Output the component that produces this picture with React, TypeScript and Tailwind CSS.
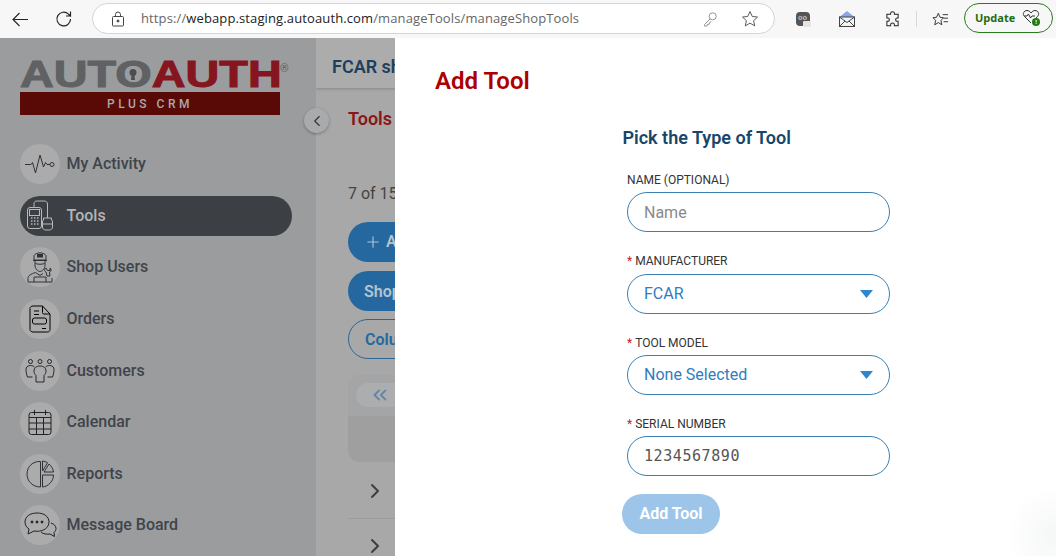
import { ChevronLeft, ChevronRight, ChevronsLeft, Plus } from 'lucide-react'
import type { ReactNode } from 'react'

const roboto = 'font-[Roboto,sans-serif]'

const ActivityIcon = () => (
  <svg width="32" height="32" viewBox="0 0 32 32" fill="none" stroke="#2e3238" strokeWidth="1">
    <path d="M1 16.500h6l1.500-2 3 10.500L16 7l3.500 12 2-4.500 1.500 2h3" />
    <circle cx="28" cy="16.500" r="2" />
  </svg>
)

const ToolsIcon = () => (
  <svg width="28" height="32" viewBox="0 0 28 32" fill="none" stroke="#b7b9bb" strokeWidth="1">
    <rect x="1.500" y="7.500" width="14" height="21" rx="2.500" />
    <rect x="3.500" y="9.500" width="10" height="6" />
    <path d="M5 18h1.500M8 18h1.500M11 18h1.500M5 21h1.500M8 21h1.500M11 21h1.500M5 24h1.500M8 24h1.500M11 24h1.500" strokeWidth="1.600" />
    <path d="M8 7.500V4c0-2 1-3 3-3h7c2.500 0 3.500 1.500 3.500 3v14" />
    <path d="M17.500 18h8v2l1 1v7l-2 2h-6l-2-2v-7l1-1z" />
    <path d="M17 24h9" />
  </svg>
)

const UserIcon = () => (
  <svg width="26" height="32" viewBox="0 0 26 32" fill="none" stroke="#2e3238" strokeWidth="1">
    <path d="M7 9V4.500C9 1 17 1 19 4.500V9z" />
    <rect x="10.500" y="3.500" width="5" height="2.500" fill="#2e3238" />
    <path d="M6 9.500h14M8 10v4c0 4 3 6.500 5 6.500s5-2.500 5-6.500v-4" />
    <path d="M8.500 12.500c3 1 6 1 9 0" />
    <path d="M1 31v-3.500c0-3 3-4.500 7.500-6l4.500 3 3-2M25 31v-4M1 31h24M7 31v-5h12v5" />
    <path d="M19 17c-2 1-1.500 3.500 0 4l1 4h3l-.500-4c2-.500 2-3 .500-4v2.500h-2.500z" />
  </svg>
)

const OrdersIcon = () => (
  <svg width="22" height="28" viewBox="0 0 22 28" fill="none" stroke="#000" strokeWidth="1">
    <path d="M4 1h9.500l7.500 8v15.500c0 1.500-1 2.500-2.500 2.500H4c-1.500 0-3-1-3-2.500v-21C1 2 2.500 1 4 1z" />
    <path d="M13.500 1v6.500c0 1 .5 1.500 1.500 1.500h6" />
    <path d="M5 6h5M5 9.500h5M13 23.500h4" />
    <rect x="3.500" y="13" width="14" height="6" rx="2" />
  </svg>
)

const CustomersIcon = () => (
  <svg width="30" height="24" viewBox="0 0 30 24" fill="none" stroke="#23262b" strokeWidth="1">
    <circle cx="5.500" cy="2.500" r="2" />
    <circle cx="15" cy="2.500" r="2" />
    <circle cx="24.500" cy="2.500" r="2" />
    <path d="M9.500 8c-1-1-2.500-1.500-4-1.500-3 0-4.500 2-4.500 4 0 2.500.5 5 1.500 7.500h5" />
    <path d="M20.500 8c1-1 2.500-1.500 4-1.500 3 0 4.500 2 4.500 4 0 2.500-.5 5-1.500 7.500h-5" />
    <path d="M15 7c-3.500 0-6 2-6 5 0 2 1 3.500 2 4.500V23h8v-6.500c1-1 2-2.500 2-4.500 0-3-2.500-5-6-5z" />
  </svg>
)

const CalendarIcon = () => (
  <svg width="24" height="26" viewBox="0 0 24 26" fill="none" stroke="#1f2226" strokeWidth="1">
    <rect x="1" y="3.500" width="22" height="22" rx="2.500" />
    <path d="M1 8.500h22M1 14h22M1 20h22M8.500 8.500v17M15.500 8.500v17M6.500 1v5M17.500 1v5" />
  </svg>
)

const ReportsIcon = () => (
  <svg width="28" height="28" viewBox="0 0 28 28" fill="none" stroke="#2e3238" strokeWidth="1">
    <path d="M14.500 1.500C7 1 1 6.500 1 14s6 13 13.500 13V14z" />
    <path d="M16.500 1c2 .2 3.500.8 5 1.800L16.500 11z" />
    <path d="M23 4c2.500 2 4 5 4.500 8H18z" />
    <path d="M16.500 15h11c0 6-5 11.500-11 12z" />
  </svg>
)

const MessageIcon = () => (
  <svg width="33" height="26" viewBox="0 0 33 26" fill="none" stroke="#1f2226" strokeWidth="1">
    <path d="M13 1C6 1 1 4.500 1 10c0 3 1.500 5.500 4 7l-1 5 6-3c1 .2 2 .3 3 .3 7 0 12-4 12-9.300C25 4.500 20 1 13 1z" />
    <circle cx="8" cy="10" r="1" fill="#1f2226" />
    <circle cx="13" cy="10" r="1" fill="#1f2226" />
    <circle cx="18" cy="10" r="1" fill="#1f2226" />
    <path d="M27 11c3 1 5 3 5 5.500 0 1.500-.8 3-2 4l.5 4-4.500-2.500c-3 .5-7 0-9-2" />
  </svg>
)

const NavItem = ({ icon, label, active }: { icon: ReactNode; label: string; active?: boolean }) => (
  <div className={`flex items-center h-10 rounded-full w-[272px] ${active ? 'bg-[#3c4044]' : ''}`}>
    <div className={`w-10 h-10 rounded-full flex items-center justify-center shrink-0 ${active ? '' : 'bg-[#ababac]'}`}>
      {icon}
    </div>
    <span className={`ml-[6.500px] text-base font-medium ${active ? 'text-[#b3b5b7]' : 'text-[#3f444b]'}`}>{label}</span>
  </div>
)

const Field = ({ label, required, children }: { label: string; required?: boolean; children: ReactNode }) => (
  <div className="flex flex-col">
    <div className="h-[12px] flex items-center text-xs leading-none text-[#333] ml-[5px]">
      {required && <span className="text-[#c81e1e] mr-[3px]">*</span>}
      {label}
    </div>
    {children}
  </div>
)

const boxClass = 'ml-[5px] mt-[6px] w-[263px] h-10 rounded-full border border-[#3c7fb1] flex items-center justify-between pl-4 pr-4 text-base'

const Arrow = () => (
  <svg width="13" height="8" viewBox="0 0 13 8">
    <path d="M0 0h13L6.500 8z" fill="#2f86cc" />
  </svg>
)

const BrowserBar = () => (
  <div className="h-[38px] bg-[#f7f7f7] flex items-center shrink-0 relative">
    <svg width="16" height="15" viewBox="0 0 16 15" fill="none" stroke="#222" strokeWidth="1.100" className="ml-[12px]">
      <path d="M16 7.500H1M7.500 1 1 7.500 7.500 14" />
    </svg>
    <svg width="18" height="18" viewBox="0 0 18 18" fill="none" stroke="#222" strokeWidth="1.200" className="ml-[27px]">
      <path d="M15.500 9a6.800 6.800 0 1 1-2-4.800L15.500 6V1.500M15.500 6H11" />
    </svg>
    <div className="ml-[19px] mb-px w-[683px] h-[31px] rounded-full bg-white border border-[#d4d4d4] flex items-center font-['Open_Sans',sans-serif] text-[13px] text-[#666]">
      <svg width="14" height="16" viewBox="0 0 14 16" fill="none" stroke="#444" strokeWidth="1" className="ml-[18px]">
        <rect x="1.500" y="5.500" width="11" height="9.500" rx="1" />
        <path d="M4.500 5.500V3.500a2.500 2.500 0 0 1 5 0v2" />
        <circle cx="7" cy="10" r="1" fill="#444" />
      </svg>
      <span className="ml-[16px] tracking-[0.120px] whitespace-nowrap">
        https://<span className="text-[#222]">webapp.staging.autoauth.com</span>/manageTools/manageShopTools
      </span>
      <svg width="16" height="16" viewBox="0 0 18 18" fill="none" stroke="#888" strokeWidth="1" className="ml-auto">
        <circle cx="12" cy="6" r="4" />
        <path d="M9 9 3 15v2h2.500l.5-2h2l.5-2 2-1" />
      </svg>
      <svg width="18" height="18" viewBox="0 0 24 24" fill="none" stroke="#555" strokeWidth="1.300" className="ml-[23px] mr-[15px]">
        <path d="m12 2 3 6.600 7 .8-5.200 4.800 1.500 7L12 17.500 5.700 21.200l1.500-7L2 9.400l7-.8z" />
      </svg>
    </div>
    <div className="ml-[21px] w-[14px] h-[14px] rounded-[4px] bg-[#555] relative shrink-0 flex items-center justify-center pb-[2px] pr-[1px] text-[8px] font-bold leading-none text-[#bbb]">
      oo
      <div className="absolute right-[-1px] bottom-[-1px] w-[8px] h-[6px] bg-[#e4e4e4] rounded-[1px]" />
    </div>
    <svg width="16" height="16" viewBox="0 0 16 16" className="ml-[29px] shrink-0" fill="none">
      <path d="M.5 6 8 0l7.500 6v2H.5z" fill="#8aa4e8" />
      <rect x=".5" y="6" width="15" height="9.500" fill="#f4f4f4" stroke="#444" />
      <path d="m.5 6 7.500 5.500L15.500 6M.5 15.500 6 10M15.500 15.500 10 10" stroke="#444" />
    </svg>
    <svg width="15" height="16" viewBox="0 0 24 24" fill="none" stroke="#222" strokeWidth="1.600" preserveAspectRatio="none" className="ml-[30px] shrink-0">
      <path d="M9 3.500c0-1.500 1.200-2.500 3-2.500s3 1 3 2.500V5h6v5.500h-1.500c-1.500 0-2.500 1.200-2.500 2.500s1 2.500 2.500 2.500H21V22h-6v-1.500c0-1.500-1.200-2.500-3-2.500s-3 1-3 2.500V22H3v-6.500h1.500C6 15.500 7 14.300 7 13s-1-2.500-2.500-2.500H3V5h6z" />
    </svg>
    <div className="ml-[16px] w-px h-4 bg-[#d8d8d8] shrink-0" />
    <svg width="17" height="15" viewBox="0 0 19 17" fill="none" stroke="#222" strokeWidth="1" className="ml-[15px] shrink-0">
      <path d="M7 1.500 9 6l4 .5-3 3 1 5-4-2.500L3 14.500l1-5-3-3L5 6zM12 3h6M13 7h5M13 11h5" />
    </svg>
    <div className="ml-[15px] mb-[2px] w-[89px] h-[30px] rounded-full border border-[#2c7a1f] flex items-center font-['Open_Sans',sans-serif] text-[11px] font-bold text-[#1f6b14] shrink-0 pl-[10px]">
      Update
      <div className="relative ml-[7px] w-5 h-[18px]">
        <svg width="20" height="18" viewBox="0 0 20 18" fill="none" stroke="#333" strokeWidth="1">
          <path d="M9 14 2.500 7.500C0 5 2 1.500 5 1.500c1.500 0 3 1 4 2.500 1-1.500 2.500-2.500 4-2.500 3 0 5 3.500 2.500 6L14 9" />
          <path d="M2 7h3l1.500-2 2 4L10 7h3" />
        </svg>
        <span className="absolute left-[10px] top-[9px] w-2 h-2 rounded-full bg-[#1f7a1f] flex items-center justify-center text-[6px] leading-none text-white">!</span>
      </div>
    </div>
  </div>
)

const Sidebar = () => (
  <aside className="w-[316px] shrink-0 bg-[#9b9c9e] pl-5 flex flex-col">
    <div className="w-[260px] mt-[24px] relative">
      <div className="h-[26px] flex items-center font-['Liberation_Sans',sans-serif] font-bold text-[36px] leading-none origin-left scale-x-[1.300] whitespace-nowrap [-webkit-text-stroke:1px_currentColor]">
        <span className="text-[#5f6163]">AUTO</span>
        <span className="text-[#85151f]">AUTH</span>
      </div>
      <svg width="8" height="11" viewBox="0 0 8 11" className="absolute left-[109px] top-[7px]">
        <circle cx="4" cy="3.500" r="3.500" fill="#4b4d4f" />
        <path d="M2.800 5h2.400L6 11H2z" fill="#4b4d4f" />
      </svg>
      <span className="absolute left-[260px] top-[1px] text-[11px] leading-none text-[#606163]">®</span>
      <div className="mt-[4px] h-[23px] bg-[#590a06] flex items-center justify-center text-[12px] font-medium tracking-[3.500px] text-[#a9a9a9]">
        PLUS CRM
      </div>
    </div>
    <nav className="mt-[29px] flex flex-col gap-[11.630px]">
      <NavItem icon={<ActivityIcon />} label="My Activity" />
      <NavItem icon={<ToolsIcon />} label="Tools" active />
      <NavItem icon={<UserIcon />} label="Shop Users" />
      <NavItem icon={<OrdersIcon />} label="Orders" />
      <NavItem icon={<CustomersIcon />} label="Customers" />
      <NavItem icon={<CalendarIcon />} label="Calendar" />
      <NavItem icon={<ReportsIcon />} label="Reports" />
      <NavItem icon={<MessageIcon />} label="Message Board" />
    </nav>
  </aside>
)

const MainBehind = () => (
  <main className="flex-1 bg-[#a8a8a8] overflow-hidden whitespace-nowrap">
    <div className="h-[50px] bg-[#acacac] pl-4 pt-[16px] shadow-[0_1px_3px_rgba(0,0,0,0.2)] text-lg font-semibold leading-[26px] text-[#1c3f5c]">
      FCAR shop
    </div>
    <div className="pl-8">
      <div className="mt-[20px] h-[22px] text-lg font-semibold leading-[22px] text-[#8a1616]">Tools</div>
      <div className="mt-[53px] h-[22px] text-base leading-[22px] text-[#444]">7 of 15</div>
      <div className="mt-[17px] w-[200px] h-10 rounded-full bg-[#24689f] flex items-center pl-4 text-[#b4c3cf] font-semibold">
        <Plus size={18} strokeWidth={1.5} />
        <span className="ml-1">Add</span>
      </div>
      <div className="mt-[9px] w-[200px] h-10 rounded-full bg-[#24689f] flex items-center pl-4 pt-px text-[#b4c3cf] font-semibold">
        Shop
      </div>
      <div className="mt-[8px] w-[200px] h-10 rounded-full border border-[#2c6694] flex items-center pl-4 pt-px text-[#24689f] font-semibold">
        Columns
      </div>
      <div className="mt-[16px] w-[200px] h-[87px] rounded-xl bg-[#9f9f9f] overflow-hidden">
        <div className="h-[41px] bg-[#a3a5a6] pt-2 pl-2">
          <div className="w-[100px] h-6 rounded-full bg-[#abadae] flex items-center pl-[13px] text-[#6484a8]">
            <ChevronsLeft size={22} strokeWidth={2} />
          </div>
        </div>
      </div>
      <div className="mt-[1px] h-[56px] border-b border-[#9c9c9c] flex items-center pl-[15px] text-[#3c3f44]">
        <ChevronRight size={24} strokeWidth={2} />
      </div>
      <div className="h-[54px] flex items-center pl-[15px] text-[#3c3f44]">
        <ChevronRight size={24} strokeWidth={2} />
      </div>
    </div>
  </main>
)

const AddToolPanel = () => (
  <section className="absolute left-[395px] right-0 top-0 bottom-0 bg-[radial-gradient(circle_at_100%_96%,#f5f6f6_0,#ffffff_50px)]">
    <h1 className="pl-10 pt-[27px] text-2xl font-semibold leading-8 text-[#ad0000]">Add Tool</h1>
    <div className="ml-[227px] mt-[29px] w-[280px]">
      <h2 className="pl-[0.500px] text-lg font-semibold leading-6 text-[#17466b]">Pick the Type of Tool</h2>
      <div className="mt-[24px] flex flex-col gap-[23px]">
        <Field label="NAME (OPTIONAL)">
          <div className={`${boxClass} pt-px text-[#8a8a8a]`}>Name</div>
        </Field>
        <Field label="MANUFACTURER" required>
          <div className={`${boxClass} mt-[7px] text-[#2f7dbd]`}>
            FCAR
            <Arrow />
          </div>
        </Field>
        <Field label="TOOL MODEL" required>
          <div className={`${boxClass} mt-[6px] text-[#2f7dbd]`}>
            None Selected
            <Arrow />
          </div>
        </Field>
        <Field label="SERIAL NUMBER" required>
          <div className={`${boxClass} mt-[6px] pt-px font-['DejaVu_Sans_Mono',monospace] text-[15px] tracking-[0.570px] text-[#555]`}>1234567890</div>
        </Field>
      </div>
      <button className="mt-[18px] w-[98px] h-10 rounded-full bg-[#9cc5e9] text-white text-base font-bold">Add Tool</button>
    </div>
  </section>
)

export default function App() {
  return (
    <div className={`w-[1056px] h-[556px] overflow-hidden flex flex-col ${roboto}`}>
      <BrowserBar />
      <div className="flex-1 flex relative overflow-hidden">
        <Sidebar />
        <MainBehind />
        <button className="absolute left-[304px] top-[70px] w-[25px] h-[25px] rounded-full bg-[#a9aaab] shadow-[0_1px_3px_rgba(0,0,0,0.3)] flex items-center justify-center text-[#333]">
          <ChevronLeft size={18} strokeWidth={1.5} />
        </button>
        <AddToolPanel />
      </div>
    </div>
  )
}
